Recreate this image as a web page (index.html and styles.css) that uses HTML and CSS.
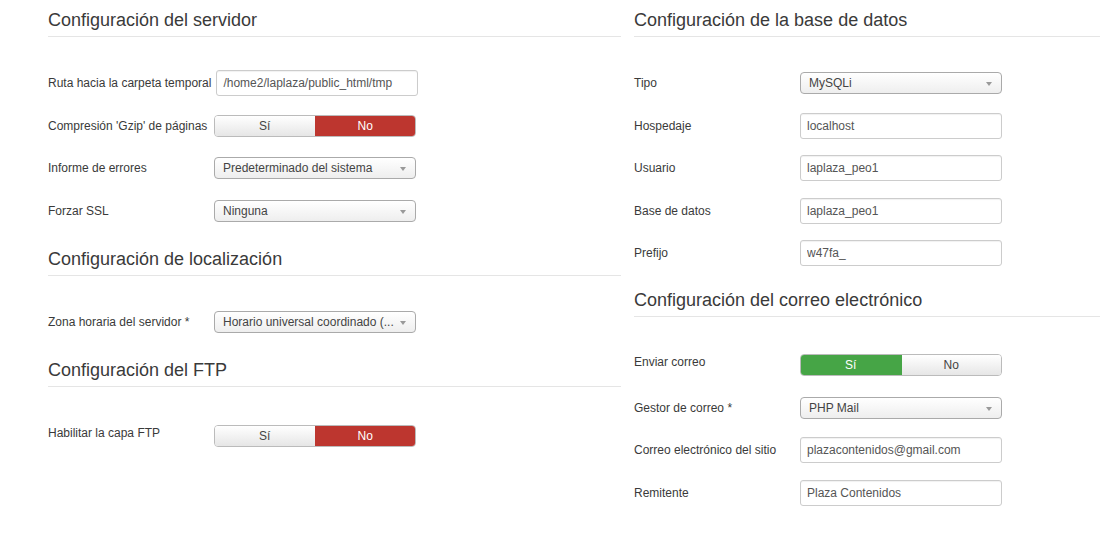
FILE: index.html
```html
<!DOCTYPE html>
<html>

	<head>
		<meta charset="UTF-8">
		<title>Configuración global</title>
		<link rel="stylesheet" href="styles.css">
	</head>

	<body>
		<div class="page">
			<div class="col col-left">
				<h2>Configuración del servidor</h2>
				<div class="row">
					<label class="long">Ruta hacia la carpeta temporal</label>
					<input class="text" type="text" value="/home2/laplaza/public_html/tmp">
				</div>
				<div class="row">
					<label>Compresión 'Gzip' de páginas</label>
					<div class="toggle">
						<span>Sí</span><span class="no on">No</span>
					</div>
				</div>
				<div class="row">
					<label>Informe de errores</label>
					<div class="select">Predeterminado del sistema</div>
				</div>
				<div class="row">
					<label>Forzar SSL</label>
					<div class="select">Ninguna</div>
				</div>

				<h2 class="next">Configuración de localización</h2>
				<div class="row">
					<label>Zona horaria del servidor *</label>
					<div class="select">Horario universal coordinado (...</div>
				</div>

				<h2 class="next ftp">Configuración del FTP</h2>
				<div class="row">
					<label class="up">Habilitar la capa FTP</label>
					<div class="toggle">
						<span>Sí</span><span class="no on">No</span>
					</div>
				</div>
			</div>

			<div class="col col-right">
				<h2>Configuración de la base de datos</h2>
				<div class="row">
					<label>Tipo</label>
					<div class="select">MySQLi</div>
				</div>
				<div class="row">
					<label>Hospedaje</label>
					<input class="text" type="text" value="localhost">
				</div>
				<div class="row">
					<label>Usuario</label>
					<input class="text" type="text" value="laplaza_peo1">
				</div>
				<div class="row">
					<label>Base de datos</label>
					<input class="text" type="text" value="laplaza_peo1">
				</div>
				<div class="row">
					<label>Prefijo</label>
					<input class="text" type="text" value="w47fa_">
				</div>

				<h2 class="next mail">Configuración del correo electrónico</h2>
				<div class="row">
					<label class="up">Enviar correo</label>
					<div class="toggle">
						<span class="yes on">Sí</span><span>No</span>
					</div>
				</div>
				<div class="row">
					<label>Gestor de correo *</label>
					<div class="select">PHP Mail</div>
				</div>
				<div class="row">
					<label>Correo electrónico del sitio</label>
					<input class="text" type="text" value="plazacontenidos@gmail.com">
				</div>
				<div class="row">
					<label>Remitente</label>
					<input class="text" type="text" value="Plaza Contenidos">
				</div>
			</div>
		</div>
	</body>

</html>
```

FILE: styles.css
```css
body {
	margin: 0;
	background: #FFFFFF;
	color: #333333;
	font-family: "Liberation Sans", Arial, sans-serif;
	font-size: 12px;
}

.page {
	display: flex;
	gap: 13px;
	padding: 8px 0 0 48px;
	overflow: hidden;
}

.col-left {
	width: 573px;
	flex: none;
}

.col-right {
	width: 480px;
	flex: none;
}

h2 {
	margin: 0 0 33px 0;
	padding-bottom: 4px;
	font-size: 18px;
	line-height: 24px;
	font-weight: normal;
	color: #3A3A3A;
	border-bottom: 1px solid #E5E5E5;
}

/* margins collapse with the row's margin-bottom */
h2.next {
	margin-top: 23px;
}

h2.ftp {
	margin-bottom: 36px;
}

h2.mail {
	margin-top: 22px;
	margin-bottom: 35px;
}

.row {
	display: flex;
	align-items: center;
	height: 26px;
	margin-bottom: 16.5px;
}

.row label {
	flex: none;
	min-width: 166px;
	white-space: nowrap;
	color: #3A3A3A;
}

.row label.long {
	min-width: 162px;
	padding-right: 5px;
}

.row label.up {
	position: relative;
	top: -3px;
}

.text {
	box-sizing: border-box;
	width: 202px;
	height: 26px;
	padding: 0 6px;
	margin: 0;
	border: 1px solid #CCCCCC;
	border-radius: 3px;
	box-shadow: inset 0 1px 1px rgba(0, 0, 0, 0.06);
	font-family: "Liberation Sans", Arial, sans-serif;
	font-size: 12px;
	color: #555555;
}

.select {
	box-sizing: border-box;
	position: relative;
	width: 202px;
	height: 22px;
	line-height: 20px;
	padding: 0 24px 0 8px;
	border: 1px solid #AAAAAA;
	border-radius: 4px;
	background: linear-gradient(#FFFFFF, #EEEEEE);
	color: #444444;
	white-space: nowrap;
	overflow: hidden;
}

.select:after {
	content: "";
	position: absolute;
	right: 9px;
	top: 9px;
	border-left: 3.5px solid transparent;
	border-right: 3.5px solid transparent;
	border-top: 4px solid #999999;
}

.toggle {
	display: flex;
	width: 202px;
	height: 22px;
	box-sizing: border-box;
	border-radius: 4px;
	border: 1px solid #BBBBBB;
	overflow: hidden;
}

.toggle span {
	flex: 1;
	text-align: center;
	line-height: 20px;
	color: #444444;
	background: linear-gradient(#FFFFFF, #E6E6E6);
}

.toggle span + span {
	border-left: 1px solid #CCCCCC;
}

.toggle .no.on {
	background: #BD362F;
	color: #FFFFFF;
	border-left-color: #BD362F;
}

.toggle .yes.on {
	background: #46A546;
	color: #FFFFFF;
}

.toggle .yes.on + span {
	border-left-color: #46A546;
}
```
